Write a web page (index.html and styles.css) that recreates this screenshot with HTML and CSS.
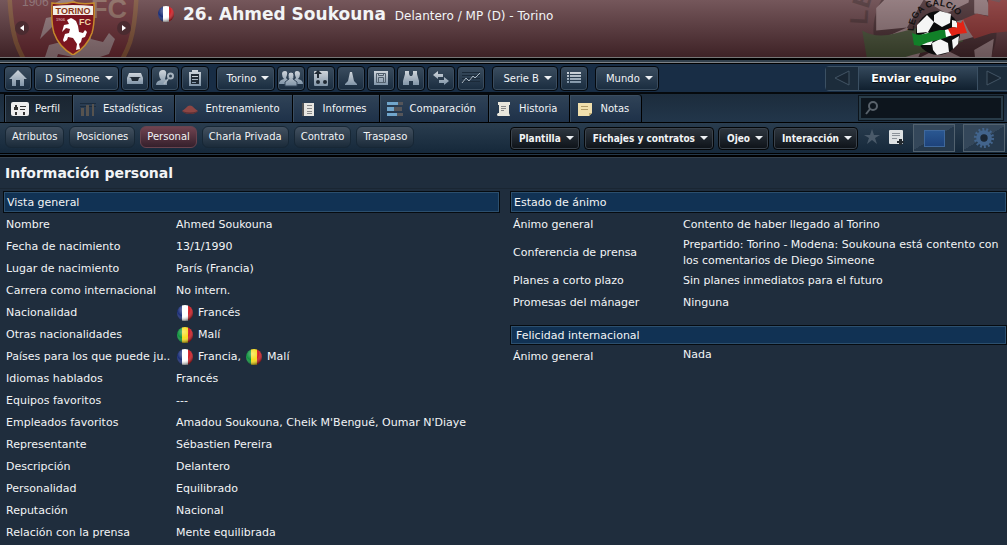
FILE: index.html
```html
<!DOCTYPE html>
<html lang="es">
<head>
  <meta charset="UTF-8">
  <title>Ahmed Soukouna - Información personal</title>
  <link rel="stylesheet" href="styles.css">
</head>
<body>
  <svg class="defs" width="0" height="0" aria-hidden="true">
    <defs>
      <linearGradient id="steel" x1="0" y1="0" x2="0" y2="1">
        <stop offset="0" stop-color="#cfd5db"/><stop offset="1" stop-color="#8195a8"/>
      </linearGradient>
      <radialGradient id="gloss" cx=".4" cy=".3" r=".7">
        <stop offset="0" stop-color="#fff" stop-opacity=".4"/><stop offset=".55" stop-color="#fff" stop-opacity="0"/><stop offset="1" stop-color="#000" stop-opacity=".5"/>
      </radialGradient>
      <clipPath id="round"><circle cx="8" cy="8" r="8"/></clipPath>
    </defs>
    <symbol id="crest" viewBox="0 0 44 54">
      <path d="M1 2Q12 4 22 1Q32 4 43 2Q44 22 41 32Q36 46 22 54Q8 46 3 32Q0 22 1 2Z" fill="#7b1620" stroke="#c58a2c" stroke-width="1.5"/>
      <path d="M2 5Q22 3 42 5V14H2Z" fill="#f2eee8"/>
      <text x="22" y="12.500" text-anchor="middle" font-family="Liberation Sans" font-weight="bold" font-size="9" fill="#8a3516">TORINO</text>
      <text x="5" y="20" font-family="Liberation Sans" font-size="4" fill="#e5d5d8">1906</text>
      <text x="28" y="24" font-family="Liberation Sans" font-weight="bold" font-size="9" fill="#f0d4a8">FC</text>
      <path d="M16 19L20 17L22 18L25 20L27 25L28 31L32 32L34 29L36 31L34 36L31 37L30 41L28 43L29 48L25 49L26 43L22 37L17 36L16 39L13 41L12 39L14 33L18 32L19 28L15 27L11 31L13 24L18 23Z" fill="#fff"/>
    </symbol>
    <symbol id="lega" viewBox="0 0 64 60">
      <path id="arc" d="M8 31A24 24 0 0 1 55 23" fill="none"/>
      <text font-family="Liberation Sans" font-weight="bold" font-size="9" fill="#151313"><textPath href="#arc">LEGA CALCIO</textPath></text>
      <circle cx="32" cy="33" r="22" fill="#0c0c0d"/>
      <path d="M11 25L21 15L28 22L22 32L11 33ZM28 15L34 11L45 14L44 23L36 27L28 22ZM13 36L22 32L28 38L25 45L15 45ZM26 43L34 39L42 43L43 52L31 55L27 50ZM46 40L53 36L52 44L47 49ZM46 20L50 21L53 28L46 27Z" fill="#f5f5f5"/>
      <path d="M6 33Q11 36 18 34L34 30L41 30L42 37L32 40Q20 42 14 46L8 45Z" fill="#118028"/>
      <path d="M39 30L46 28L47 35L40 37Z" fill="#fff"/>
      <path d="M42 29L47 27L51 28L51 22L55 23L57 20L58 24L60 30L61 33L52 34L46 36L44 33Z" fill="#e32416"/>
    </symbol>
    <symbol id="france" viewBox="0 0 16 16">
      <g clip-path="url(#round)"><path d="M0 0H5V16H0Z" fill="#1c2f78"/><path d="M5 0H11V16H5Z" fill="#fff"/><path d="M11 0H16V16H11Z" fill="#d12229"/></g>
      <circle cx="8" cy="8" r="8" fill="url(#gloss)"/>
    </symbol>
    <symbol id="mali" viewBox="0 0 16 16">
      <g clip-path="url(#round)"><path d="M0 0H5V16H0Z" fill="#139440"/><path d="M5 0H11V16H5Z" fill="#f8dc1c"/><path d="M11 0H16V16H11Z" fill="#d12229"/></g>
      <circle cx="8" cy="8" r="8" fill="url(#gloss)"/>
    </symbol>
  </svg>

  <header class="banner">
    <svg class="crest-shadow" aria-hidden="true"><use href="#crest"/></svg>
    <svg class="lega-shadow" aria-hidden="true"><use href="#lega"/></svg>
    <div class="club">
      <button class="arrow" aria-label="Anterior"><svg viewBox="0 0 14 14"><path d="M9 4V10L5 7Z"/></svg></button>
      <svg class="crest" role="img" aria-label="Torino FC"><use href="#crest"/></svg>
      <button class="arrow" aria-label="Siguiente"><svg viewBox="0 0 14 14"><path d="M5 4V10L9 7Z"/></svg></button>
    </div>
    <div class="player">
      <svg class="flag"><use href="#france"/></svg>
      <h1>26. Ahmed Soukouna</h1>
      <span class="role">Delantero / MP (D) - Torino</span>
    </div>
    <svg class="lega" role="img" aria-label="Lega Calcio"><use href="#lega"/></svg>
  </header>

  <div class="toolbar">
    <div class="group">
      <button class="tool" aria-label="Inicio"><svg viewBox="0 0 20 18"><path d="M10 1L19 10H16V17H12V11H8V17H4V10H1Z"/></svg></button>
      <button class="tool menu" aria-haspopup="true">D Simeone</button>
      <button class="tool" aria-label="Bandeja"><svg viewBox="0 0 20 18"><path d="M4 4H16L18 9V15H2V9Z"/><path class="dark" d="M4 8H16L14 9L13 12H7L6 9Z"/></svg></button>
      <button class="tool" aria-label="Buscar empleado"><svg viewBox="0 0 20 18"><path d="M4 5Q4 1 8 1Q12 1 11 6L10 10L12 12V16H1Q1 12 6 11Q4 8 4 5Z"/><path class="ring" d="M18 7A2.500 2.500 0 1 1 13 7A2.500 2.500 0 1 1 18 7M13 10L9 15"/></svg></button>
      <button class="tool" aria-label="Tareas"><svg viewBox="0 0 20 18"><path d="M4 3H7V1H13V3H16V17H4Z"/><path class="dark" d="M6 5H14V15H6Z"/><path d="M7 7H13V8H7ZM7 10H13V11H7ZM7 13H11V14H7Z"/></svg></button>
    </div>
    <div class="group">
      <button class="tool menu" aria-haspopup="true">Torino</button>
      <button class="tool" aria-label="Plantilla"><svg class="wide" viewBox="0 0 24 18"><path d="M3 5Q3 2 6 2Q9 2 8 6L7 9L9 11V15H0Q0 11 5 10Q3 8 3 5ZM21 5Q21 2 18 2Q15 2 16 6L17 9L15 11V15H24Q24 11 19 10Q21 8 21 5Z"/><path class="edge" d="M9 6Q9 3 12 3Q15 3 15 6Q15 9 14 10L18 13V17H6V13L10 10Q9 9 9 6Z"/></svg></button>
      <button class="tool" aria-label="Táctica"><svg viewBox="0 0 20 18"><rect x="3" y="2" width="14" height="15" rx="1"/><path class="dark" d="M7 1L11 5H8V9H6V5H3Z"/><circle class="dark" cx="7" cy="13" r="2"/><circle class="dark" cx="14" cy="13" r="2"/></svg></button>
      <button class="tool" aria-label="Entrenamiento"><svg viewBox="0 0 20 18"><path d="M9 3H11L13 12L16 15V16H4V15L7 12Z"/></svg></button>
      <button class="tool" aria-label="Calendario"><svg viewBox="0 0 20 18"><path d="M3 2H17V16H3Z"/><path class="line" d="M5.500 4.500H14.500V13.500H5.500ZM7.500 4.500V6.500H12.500V4.500M7.500 13.500V8.500H12.500V13.500"/></svg></button>
      <button class="tool" aria-label="Ojeo"><svg viewBox="0 0 20 18"><path d="M4 2H8V5L9 7H11L12 5V2H16V5L18 12V16H12V12H8V16H2V12L4 5Z"/></svg></button>
      <button class="tool" aria-label="Fichajes"><svg viewBox="0 0 20 18"><path d="M2 6L7 2V5H12V8H7V10ZM18 12L13 8V11H8V14H13V16Z"/></svg></button>
      <button class="tool" aria-label="Finanzas"><svg viewBox="0 0 20 18"><path class="grid" d="M1 3.500H19M1 6.500H19M1 9.500H19M1 12.500H19"/><path class="chart" d="M1 14L5 9L8 12L12 7L14 9L19 4"/></svg></button>
    </div>
    <div class="group">
      <button class="tool menu" aria-haspopup="true">Serie B</button>
      <button class="tool" aria-label="Clasificación"><svg viewBox="0 0 20 18"><path d="M3 3H5V5H3ZM6 3H17V5H6ZM3 6H5V8H3ZM6 6H17V8H6ZM3 9H5V11H3ZM6 9H17V11H6ZM3 12H5V14H3ZM6 12H17V14H6Z"/></svg></button>
    </div>
    <div class="group">
      <button class="tool menu" aria-haspopup="true">Mundo</button>
    </div>
    <div class="continue">
      <button class="step" aria-label="Atrás"><svg viewBox="0 0 18 18"><path d="M16 2V16L2 9Z"/></svg></button>
      <button class="send">Enviar equipo</button>
      <button class="step" aria-label="Adelante"><svg viewBox="0 0 18 18"><path d="M2 2V16L16 9Z"/></svg></button>
    </div>
  </div>

  <div class="tabbar">
    <nav class="tabs">
      <a href="#" class="active"><svg viewBox="0 0 18 16"><rect y="1" width="18" height="14" rx="2" fill="#eee"/><path d="M4 4H6V6H7V9H3V6H4ZM9 5H15V6H9ZM9 8H14V9H9ZM4 11H6V14H4ZM12 11H14V14H12Z" fill="#333"/></svg>Perfil</a>
      <a href="#"><svg viewBox="0 0 16 16"><path d="M0 2H16V3H0ZM0 5H16V6H0Z" fill="#1b2b3c"/><path d="M1 7H4V15H1ZM6 4H9V15H6ZM12 3H14V15H12Z" fill="#57534f"/></svg>Estadísticas</a>
      <a href="#"><svg viewBox="0 0 16 16"><path d="M0 10Q3 8 6 5Q8 4 10 5Q13 8 16 10Q13 13 8 13Q3 13 0 10Z" fill="#8d4644"/><path d="M0 10Q8 13 16 10Q13 13 8 13Q3 13 0 10Z" fill="#592f35"/></svg>Entrenamiento</a>
      <a href="#"><svg viewBox="0 0 16 16"><path d="M2 2H5V15H2Z" fill="#555"/><path d="M4 2H14V15H4Z" fill="#e8e6e1"/><path d="M7 4H12V5H7ZM7 7H12V8H7ZM7 10H12V11H7ZM7 12H12V13H7Z" fill="#888"/></svg>Informes</a>
      <a href="#"><svg viewBox="0 0 16 16"><path d="M0 1H11V4H0ZM0 6H7V10H0ZM0 12H10V15H0Z" fill="#71a6cc"/><path d="M11 1H16V4H11ZM7 6H15V10H7ZM10 12H16V15H10Z" fill="#56565a"/></svg>Comparación</a>
      <a href="#"><svg viewBox="0 0 16 16"><path d="M2 1H14V4H13V12L14 15H2Q0 14 2 12H3V4H2Z" fill="#e9e6dc"/><path d="M5 5H10V6H5ZM5 7H10V8H5ZM5 9H8V10H5Z" fill="#888"/></svg>Historia</a>
      <a href="#"><svg viewBox="0 0 16 16"><path d="M1 2H15V12L12 15H1Z" fill="#f0dfad"/><path d="M4 5H11V6H4ZM4 8H11V9H4Z" fill="#b09b67"/><path d="M12 12H15L12 15Z" fill="#c4ad70"/></svg>Notas</a>
    </nav>
    <label class="search">
      <svg viewBox="0 0 16 16"><circle cx="9" cy="6" r="4"/><path d="M6 9L2 14"/></svg>
      <input type="search" aria-label="Buscar">
    </label>
  </div>

  <div class="subbar">
    <nav class="pills">
      <a href="#">Atributos</a>
      <a href="#">Posiciones</a>
      <a href="#" class="active">Personal</a>
      <a href="#">Charla Privada</a>
      <a href="#">Contrato</a>
      <a href="#">Traspaso</a>
    </nav>
    <div class="actions">
      <button class="action menu" aria-haspopup="true">Plantilla</button>
      <button class="action menu" aria-haspopup="true">Fichajes y contratos</button>
      <button class="action menu" aria-haspopup="true">Ojeo</button>
      <button class="action menu" aria-haspopup="true">Interacción</button>
    </div>
    <div class="marks">
      <button aria-label="Favorito"><svg viewBox="0 0 16 16"><path d="M8 0L10 6H16L11 9L13 15L8 11L3 15L5 9L0 6H6Z" fill="#4a5a6a"/></svg></button>
      <button aria-label="Añadir nota"><svg viewBox="0 0 16 16"><rect x="1" y="1" width="14" height="14" rx="1" fill="#dde1e3"/><path d="M4 4H12V5H4ZM4 6H12V7H4ZM4 9H9V10H4Z" fill="#8b9299"/><path d="M11 10H14V12H16V14H14V16H11V14H9V12H11Z" fill="#232a30"/></svg></button>
    </div>
    <div class="views">
      <button aria-label="Vista"><span class="screen"></span></button>
      <button aria-label="Opciones"><svg viewBox="0 0 24 24"><circle cx="12" cy="12" r="9" fill="none" stroke="#42648c" stroke-width="4" stroke-dasharray="2 2.040"/><circle cx="12" cy="12" r="6" fill="none" stroke="#42648c" stroke-width="5"/><circle cx="12" cy="12" r="4" fill="#1b2734"/></svg></button>
    </div>
  </div>

  <main>
    <h2>Información personal</h2>
    <div class="columns">
      <section>
        <h3>Vista general</h3>
        <table>
          <tr><th scope="row">Nombre</th><td>Ahmed Soukouna</td></tr>
          <tr><th scope="row">Fecha de nacimiento</th><td>13/1/1990</td></tr>
          <tr><th scope="row">Lugar de nacimiento</th><td>París (Francia)</td></tr>
          <tr><th scope="row">Carrera como internacional</th><td>No intern.</td></tr>
          <tr><th scope="row">Nacionalidad</th><td><span class="nation"><svg class="flag"><use href="#france"/></svg>Francés</span></td></tr>
          <tr><th scope="row">Otras nacionalidades</th><td><span class="nation"><svg class="flag"><use href="#mali"/></svg>Malí</span></td></tr>
          <tr><th scope="row">Países para los que puede ju..</th><td><span class="nation"><svg class="flag"><use href="#france"/></svg>Francia,</span><span class="nation"><svg class="flag"><use href="#mali"/></svg>Malí</span></td></tr>
          <tr><th scope="row">Idiomas hablados</th><td>Francés</td></tr>
          <tr><th scope="row">Equipos favoritos</th><td>---</td></tr>
          <tr><th scope="row">Empleados favoritos</th><td>Amadou Soukouna, Cheik M'Bengué, Oumar N'Diaye</td></tr>
          <tr><th scope="row">Representante</th><td>Sébastien Pereira</td></tr>
          <tr><th scope="row">Descripción</th><td>Delantero</td></tr>
          <tr><th scope="row">Personalidad</th><td>Equilibrado</td></tr>
          <tr><th scope="row">Reputación</th><td>Nacional</td></tr>
          <tr><th scope="row">Relación con la prensa</th><td>Mente equilibrada</td></tr>
        </table>
      </section>
      <section>
        <h3>Estado de ánimo</h3>
        <table>
          <tr><th scope="row">Ánimo general</th><td>Contento de haber llegado al Torino</td></tr>
          <tr><th scope="row">Conferencia de prensa</th><td>Prepartido: Torino - Modena: Soukouna está contento con los comentarios de Diego Simeone</td></tr>
          <tr><th scope="row">Planes a corto plazo</th><td>Sin planes inmediatos para el futuro</td></tr>
          <tr><th scope="row">Promesas del mánager</th><td>Ninguna</td></tr>
        </table>
        <h3 class="second">Felicidad internacional</h3>
        <table class="top">
          <tr><th scope="row">Ánimo general</th><td>Nada</td></tr>
        </table>
      </section>
    </div>
  </main>
</body>
</html>
```
FILE: styles.css
```css
* {
  box-sizing: border-box;
}
body {
  margin: 0;
  background: #1f2d3d;
  color: #f2f4f6;
  font-family: 'DejaVu Sans', Verdana, sans-serif;
  font-size: 11px;
  overflow-x: hidden;
}
h1, h2, h3 {
  margin: 0;
}
a {
  color: inherit;
  text-decoration: none;
}
button {
  padding: 0;
  border: none;
  background: none;
  color: inherit;
  font: inherit;
  cursor: pointer;
}
svg {
  display: block;
  flex: none;
}
.defs {
  position: absolute;
}
.flag {
  width: 16px;
  height: 16px;
}

/* banner */
.banner {
  position: relative;
  display: flex;
  align-items: flex-start;
  height: 64px;
  overflow: hidden;
  background: linear-gradient(#75575b, #3e2226 57px, #777 57px, #777 58px, #000 58px, #000 60px, #33414d 60px, #33414d 62px, #7d8287 62px, #7d8287 63px, #000 63px);
}
.crest-shadow, .lega-shadow {
  position: absolute;
  opacity: 0.25;
}
.crest-shadow {
  left: 7px;
  top: -54px;
  width: 132px;
  height: 162px;
  clip-path: inset(54px 0 51px 0);
}
.lega-shadow {
  right: -18px;
  top: -62px;
  width: 180px;
  height: 168px;
  clip-path: inset(62px 0 49px 0);
}
.club {
  position: relative;
  display: flex;
  align-items: center;
  gap: 22px;
  padding-left: 15px;
}
.club .crest {
  width: 44px;
  height: 54px;
  margin-top: 1px;
}
.arrow {
  width: 14px;
  height: 14px;
  border-radius: 7px;
  background: #4a2b30;
}
.arrow path {
  fill: #fff;
}
.player {
  position: relative;
  display: flex;
  flex: 1;
  align-items: center;
  gap: 9px;
  padding: 2px 0 0 27px;
}
.player h1 {
  font-size: 17px;
  line-height: 24px;
}
.role {
  padding-top: 3px;
  font-size: 12px;
}
.lega {
  position: relative;
  width: 64px;
  height: 60px;
  margin-right: 37px;
}

/* main toolbar */
.toolbar {
  display: flex;
  align-items: center;
  gap: 7px;
  height: 30px;
  padding-left: 4px;
  border-bottom: 2px solid #05090d;
  background: #182d45;
}
.group {
  display: flex;
  gap: 2px;
}
.tool {
  display: flex;
  align-items: center;
  justify-content: center;
  width: 28px;
  height: 25px;
  border: 1px solid #04080d;
  border-radius: 4px;
  background: linear-gradient(#3b4d5f, #192c3f);
  box-shadow: inset 0 0 0 1px #3a4c5e;
}
.tool svg {
  width: 20px;
  height: 18px;
  fill: url(#steel);
}
.tool .wide {
  width: 24px;
}
.tool .dark {
  fill: #202a34;
}
.tool .edge {
  stroke: #34465a;
}
.tool .line, .tool .ring, .tool .grid, .tool .chart {
  fill: none;
  stroke: #515f6c;
}
.tool .ring {
  stroke: #a9b5c0;
  stroke-width: 2;
}
.tool .grid {
  stroke: #1b2a39;
}
.tool .chart {
  stroke: #a9b5c0;
  stroke-width: 1;
}
.menu::after {
  content: '';
  margin-left: 5px;
  border: 4px solid transparent;
  border-top-color: #eef1f4;
  border-bottom: none;
}
.tool.menu {
  width: auto;
  padding: 0 5px 0 10px;
  font-size: 10px;
}
.continue {
  display: flex;
  width: 186px;
  height: 25px;
  margin-left: auto;
  margin-right: -4px;
  border: 1px solid #3b5063;
  border-radius: 4px;
  background: linear-gradient(#34485b, #10202f);
}
.send {
  flex: 1;
  padding-right: 8px;
  border: solid #3b5063;
  border-width: 0 1px;
  color: #fff;
  font-weight: bold;
  text-shadow: 0 1px 1px #000;
}
.step {
  display: flex;
  align-items: center;
  justify-content: center;
  width: 32px;
  background: #1c2c3b;
}
.step svg {
  width: 18px;
  height: 18px;
}
.step path {
  fill: #192633;
  stroke: #425464;
}

/* section tabs */
.tabbar {
  display: flex;
  justify-content: space-between;
  height: 29px;
  padding: 0 4px;
  border-bottom: 1px solid #000;
  background: linear-gradient(#1c2c3c, #22364a);
}
.tabs {
  display: flex;
  border-left: 1px solid #000;
}
.tabs a {
  display: flex;
  align-items: center;
  gap: 7px;
  padding: 0 12px 0 7px;
  border-right: 1px solid #000;
  border-top: 1px solid #060a0e;
  background: linear-gradient(#304357, #1e3149);
  box-shadow: inset 1px 1px 0 #3a4d60;
  font-size: 10px;
}
.tabs .active {
  background: linear-gradient(#1a2531, #202d3a);
}
.tabs a:last-child {
  border-top-right-radius: 4px;
}
.tabs svg {
  width: 16px;
  height: 16px;
}
.tabs .active svg {
  width: 18px;
  margin: 0 -1px;
}
.search {
  display: flex;
  align-items: center;
  width: 144px;
  height: 24px;
  margin-top: 2px;
  padding: 0 3px;
  border: 2px solid #283b48;
  outline: 1px solid #0c141b;
  background: #0d151d;
}
.search svg {
  width: 16px;
  height: 16px;
  fill: none;
  stroke: #59626b;
  stroke-width: 2;
}
.search input {
  flex: 1;
  min-width: 0;
  border: none;
  outline: none;
  background: none;
  color: inherit;
  font: inherit;
}

/* page tabs and actions */
.subbar {
  display: flex;
  align-items: center;
  height: 35px;
  padding: 0 2px 5px 5px;
  background: linear-gradient(#2a3d4f, #15283a 30px, #000 30px, #000 31px, #24384a 31px, #24384a 32px, #000 32px, #000 34px, #33404d 34px);
}
.pills, .actions, .marks, .views {
  display: flex;
  align-items: center;
}
.pills {
  gap: 5px;
  padding-bottom: 3px;
}
.pills a {
  padding: 0 6px;
  border: 1px solid #172735;
  border-radius: 6px;
  background: linear-gradient(#435160, #1b2b3a);
  font-size: 10px;
  line-height: 20px;
}
.pills .active {
  border-color: #67434e;
  background: linear-gradient(#704350, #35202c);
}
.actions {
  gap: 4px;
  margin-left: auto;
}
.action {
  display: flex;
  align-items: center;
  height: 23px;
  padding: 0 5px 0 8px;
  border: 1px solid #030507;
  border-radius: 4px;
  background: linear-gradient(#2f3740, #0d1218);
  box-shadow: inset 0 0 0 1px #3a424b;
  font-family: 'DejaVu Sans Condensed', 'DejaVu Sans', sans-serif;
  font-size: 10px;
  font-weight: bold;
}
.marks {
  gap: 8px;
  padding: 0 9px 3px 6px;
}
.marks svg {
  width: 16px;
  height: 16px;
}
.views {
  gap: 8px;
}
.views button {
  display: flex;
  align-items: center;
  justify-content: center;
  width: 42px;
  height: 28px;
  border: 1px solid #52626f;
  background: linear-gradient(150deg, #34475a 50%, #26394c 50%);
}
.screen {
  width: 21px;
  height: 17px;
  border: 1px solid #3f689c;
  background: linear-gradient(#2a5791, #1d427b);
}
.views svg {
  width: 22px;
  height: 22px;
}

/* content */
main h2 {
  padding: 0 5px;
  border-bottom: 1px solid #1a2633;
  font-size: 14px;
  line-height: 30px;
}
.columns {
  display: grid;
  grid-template-columns: 1fr 1fr;
  gap: 10px;
  padding: 2px 0 0 3px;
}
h3 {
  height: 22px;
  padding: 0 3px;
  border: 1px solid #060b10;
  background: #113254;
  box-shadow: inset 0 0 0 1px #2c4f6e;
  font-size: 11px;
  font-weight: normal;
  line-height: 22px;
}
h3.second {
  height: 20px;
  margin-top: 11px;
  padding: 0 5px;
  line-height: 20px;
}
table {
  width: 100%;
  margin-top: 1px;
  border-collapse: collapse;
  table-layout: fixed;
}
th, td {
  height: 22px;
  padding: 1px 0;
  line-height: 16px;
  text-align: left;
  vertical-align: middle;
}
th {
  width: 173px;
  padding-left: 3px;
  font-weight: normal;
  white-space: nowrap;
}
.top td {
  padding-bottom: 5px;
}
.nation {
  display: inline-flex;
  align-items: center;
  gap: 5px;
  margin-right: 4px;
  padding-left: 1px;
  vertical-align: top;
}
```
